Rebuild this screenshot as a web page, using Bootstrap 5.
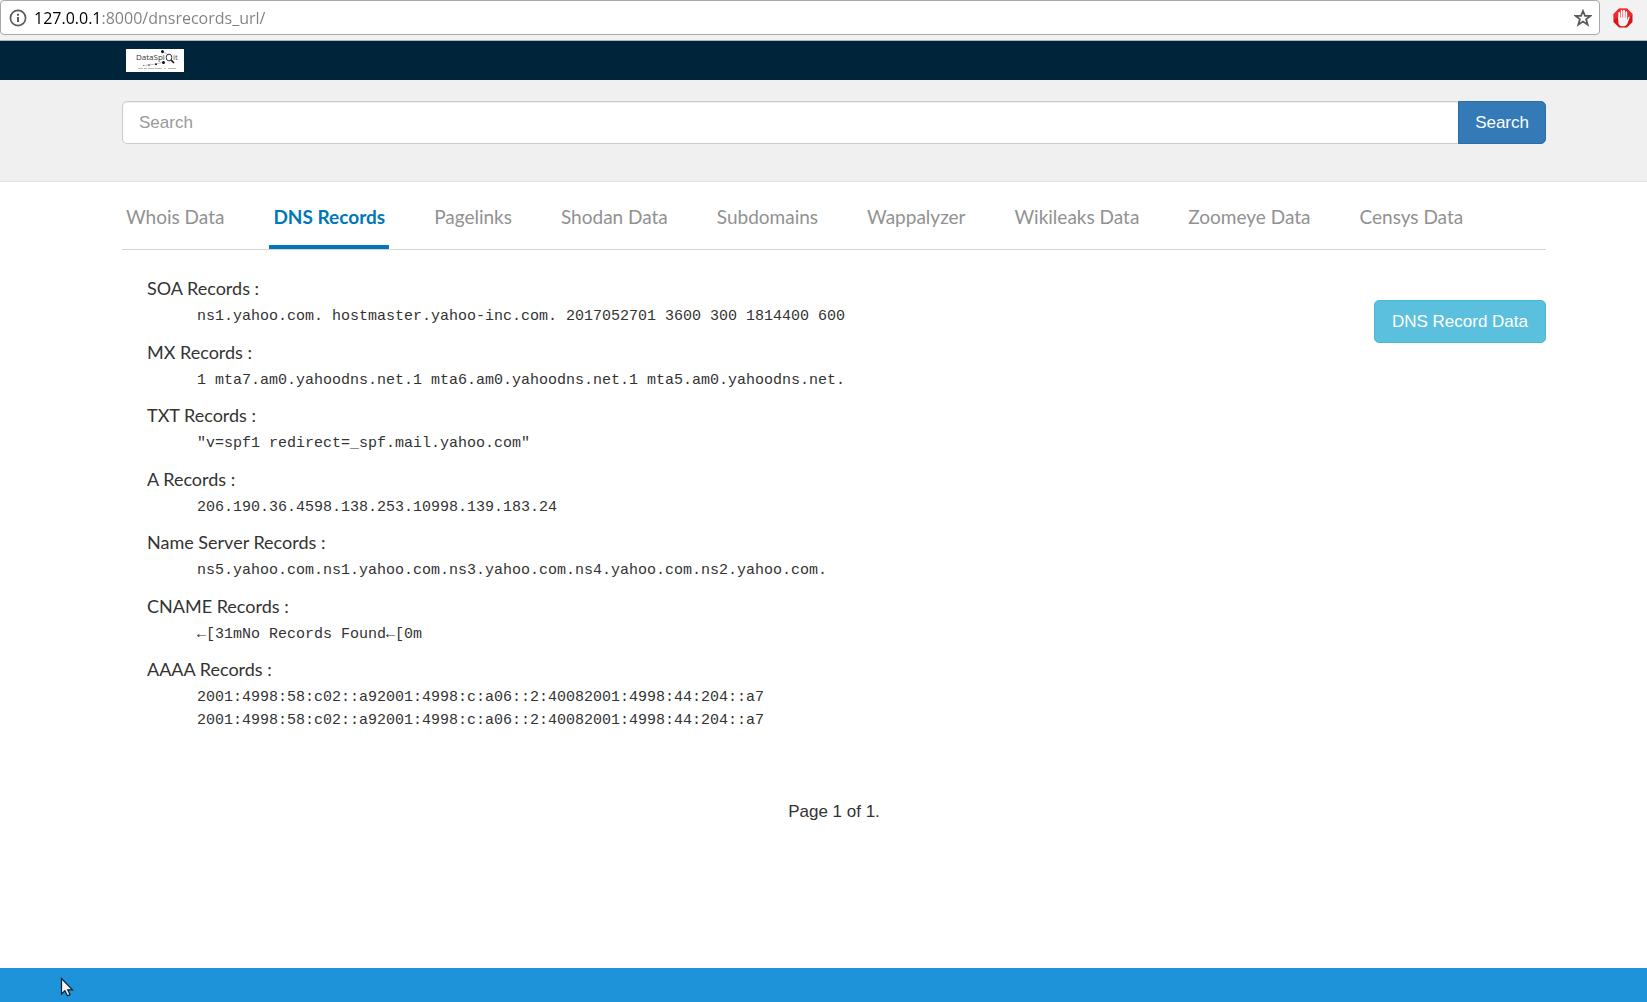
<!DOCTYPE html>
<html lang="en">
<head>
<meta charset="utf-8">
<meta name="viewport" content="width=device-width, initial-scale=1">
<title>DataSploit - DNS Records</title>
<link href="https://cdn.jsdelivr.net/npm/bootstrap@5.3.0/dist/css/bootstrap.min.css" rel="stylesheet">
<style>
  body { font-family: "Liberation Sans", Arial, sans-serif; font-size: 17px; color: #333; background: #fff; }
  .page-gutter { padding-left: 122px; padding-right: 101px; }

  .browser-bar { background: #f2f2f2; height: 41px; border-bottom: 1px solid #b6b4b6; padding-bottom: 5px; }
  .address-box { border: 1px solid #a9a7a9; border-radius: 4px; background: #fff; height: 35px; padding: 0 7px 0 8px; margin-right: 13px; }
  .address-field {
    border: 0; outline: 0; padding: 0; margin-left: 7px; height: 30px;
    font-family: "Open Sans", sans-serif; font-size: 16px;
    background: linear-gradient(90deg, #000 68px, #808080 68px);
    -webkit-background-clip: text; background-clip: text; color: transparent;
  }
  .stop-ext { margin-right: 14px; }

  .site-nav { background: #002439; height: 39px; padding-left: 126px; }
  .search-strip { background: #f0f0f0; border-bottom: 1px solid #e3e3e3; padding-top: 21px; padding-bottom: 37px; }
  .search-strip .form-control {
    height: 43px; font-size: 17px; padding: 0 16px; border: 1px solid #ccc; border-radius: 5px;
    box-shadow: inset 0 1px 1px rgba(0,0,0,.075);
  }
  .search-strip .form-control::placeholder { color: #999; }
  .btn-search, .btn-record { height: 43px; font-size: 17px; line-height: 24px; padding: 0 17px; border-radius: 5px; color: #fff; }
  .btn-search { background: #337ab7; border-color: #2e6da4; padding: 0 16px; }
  .btn-record { background: #5bc0de; border-color: #46b8da; margin-top: 50px; }
  .btn-search:hover { background: #286090; color: #fff; }
  .btn-record:hover { background: #31b0d5; color: #fff; }

  .record-tabs { border-bottom: 1px solid #d5d5d5; gap: 41px; height: 68px; }
  .record-tabs .nav-link {
    font-family: Lato, sans-serif; font-size: 19px; line-height: 30px; color: #919191;
    padding: 20px 4px 13px; border-bottom: 4px solid transparent; white-space: nowrap;
  }
  .record-tabs .nav-link.active { color: #0077b9; font-weight: 700; border-bottom-color: #0077b9; }

  .record-list { padding: 25px 0 0 25px; min-height: 525px; }
  .record-list dt { font-family: Lato, sans-serif; font-weight: 400; font-size: 18px; line-height: 1.5; margin-bottom: 4px; }
  .record-list dd { font-family: "Liberation Mono", monospace; font-size: 15px; line-height: 1.5; margin: 0 0 10px 50px; }
  .site-foot { background: #1e93d9; height: 34px; }
  .mouse-pointer { left: 60px; bottom: 4px; }
</style>
</head>
<body class="d-flex flex-column min-vh-100 position-relative">

<div class="browser-bar d-flex align-items-center">
  <div class="address-box d-flex align-items-center flex-grow-1">
    <svg width="18" height="18" viewBox="0 0 18 18" fill="none" stroke="#5a5a5a" aria-hidden="true"><circle cx="9" cy="9" r="7.600" stroke-width="1.700"/><path d="M9 8v5M9 4.800v2" stroke-width="2"/></svg>
    <input class="address-field flex-grow-1" type="text" aria-label="Address" value="127.0.0.1:8000/dnsrecords_url/">
    <svg width="18" height="18" viewBox="0 0 18 18" fill="none" stroke="#5a5a5a" stroke-width="1.800" aria-hidden="true"><path d="M9 2l2 4.900h5.300l-4.200 3.400 1.600 5.400L9 12.600l-4.700 3.100 1.600-5.400L1.700 6.900H7z"/></svg>
  </div>
  <svg class="stop-ext" width="20" height="20" viewBox="0 0 20 20" aria-hidden="true">
    <path d="M6 .5h8L19.500 6v8L14 19.500H6L.5 14V6z" fill="#dc1016"/>
    <path d="M6 .5h8L19.500 6v2L.5 11V6z" fill="#ff4444" opacity=".5"/>
    <path d="M6.200 11V5M8.600 10V3M11 10V2.700M13.300 10V4.200" stroke="#fff" stroke-width="1.800" stroke-linecap="round"/>
    <path d="M5.300 9.500h8.900v2.600l1.200-3c.4-1 1.600-.7 1.300.5l-2 5.500c-.7 2-1.900 3.200-4.200 3.200h-1c-2.400 0-3.800-1.300-4.200-3.600z" fill="#f3f3f3"/>
  </svg>
</div>

<nav class="site-nav d-flex align-items-center" aria-label="Site">
  <a href="#" class="d-flex" aria-label="DataSploit home">
    <svg width="58" height="23" viewBox="0 0 58 23">
      <rect width="58" height="23" fill="#fff"/>
      <text x="10" y="11" font-family="Open Sans, sans-serif" font-size="8" fill="#333">DataSpl</text>
      <text x="47" y="11" font-family="Open Sans, sans-serif" font-size="8" fill="#555">it</text>
      <path d="M17 16.500l6-.5 7-1 8-2M37 3l6 3M37 3l-1 2" fill="none" stroke="#999" stroke-width=".6"/>
      <ellipse cx="43" cy="8.500" rx="2.800" ry="3.400" fill="none" stroke="#333" stroke-width="1"/>
      <path d="M45 11l3 3" stroke="#111" stroke-width="1.600"/>
      <g fill="#111"><circle cx="36.500" cy="2.600" r="1.500"/><circle cx="37.500" cy="13.500" r="1.500"/><circle cx="30" cy="15.300" r="1"/><circle cx="23" cy="16" r=".7"/><circle cx="17.500" cy="16.500" r=".4"/></g>
      <path d="M12 19.500h39" stroke="#bbb" stroke-width="1.200" stroke-dasharray="5 1 3 1 6 1 7 2 2 2 8 1"/>
    </svg>
  </a>
</nav>

<form class="search-strip page-gutter" role="search">
  <div class="input-group">
    <input type="search" class="form-control" placeholder="Search" aria-label="Search">
    <button class="btn btn-search" type="button">Search</button>
  </div>
</form>

<main class="page-gutter flex-grow-1">
  <ul class="nav record-tabs flex-nowrap">
    <li class="nav-item"><a class="nav-link" href="#">Whois Data</a></li>
    <li class="nav-item"><a class="nav-link active" aria-current="page" href="#">DNS Records</a></li>
    <li class="nav-item"><a class="nav-link" href="#">Pagelinks</a></li>
    <li class="nav-item"><a class="nav-link" href="#">Shodan Data</a></li>
    <li class="nav-item"><a class="nav-link" href="#">Subdomains</a></li>
    <li class="nav-item"><a class="nav-link" href="#">Wappalyzer</a></li>
    <li class="nav-item"><a class="nav-link" href="#">Wikileaks Data</a></li>
    <li class="nav-item"><a class="nav-link" href="#">Zoomeye Data</a></li>
    <li class="nav-item"><a class="nav-link" href="#">Censys Data</a></li>
  </ul>

  <div class="d-flex justify-content-between align-items-start">
    <dl class="record-list mb-0">
      <dt>SOA Records :</dt>
      <dd>ns1.yahoo.com. hostmaster.yahoo-inc.com. 2017052701 3600 300 1814400 600</dd>
      <dt>MX Records :</dt>
      <dd>1 mta7.am0.yahoodns.net.1 mta6.am0.yahoodns.net.1 mta5.am0.yahoodns.net.</dd>
      <dt>TXT Records :</dt>
      <dd>"v=spf1 redirect=_spf.mail.yahoo.com"</dd>
      <dt>A Records :</dt>
      <dd>206.190.36.4598.138.253.10998.139.183.24</dd>
      <dt>Name Server Records :</dt>
      <dd>ns5.yahoo.com.ns1.yahoo.com.ns3.yahoo.com.ns4.yahoo.com.ns2.yahoo.com.</dd>
      <dt>CNAME Records :</dt>
      <dd>←[31mNo Records Found←[0m</dd>
      <dt>AAAA Records :</dt>
      <dd>2001:4998:58:c02::a92001:4998:c:a06::2:40082001:4998:44:204::a7<br>2001:4998:58:c02::a92001:4998:c:a06::2:40082001:4998:44:204::a7</dd>
    </dl>
    <button class="btn btn-record" type="button">DNS Record Data</button>
  </div>
  <p class="text-center pt-4 mb-0">Page 1 of 1.</p>
</main>

<footer class="site-foot"></footer>

<svg class="mouse-pointer position-absolute" width="14" height="21" viewBox="0 0 14 21" aria-hidden="true"><path d="M1.500 1.500v15.500l3.400-3.200 2.500 5 2.600-1.200-2.300-4.800h4.800z" fill="#f4f4f4" stroke="#0a1c33" stroke-width="1.200"/></svg>

<script src="https://cdn.jsdelivr.net/npm/bootstrap@5.3.0/dist/js/bootstrap.bundle.min.js"></script>
</body>
</html>
